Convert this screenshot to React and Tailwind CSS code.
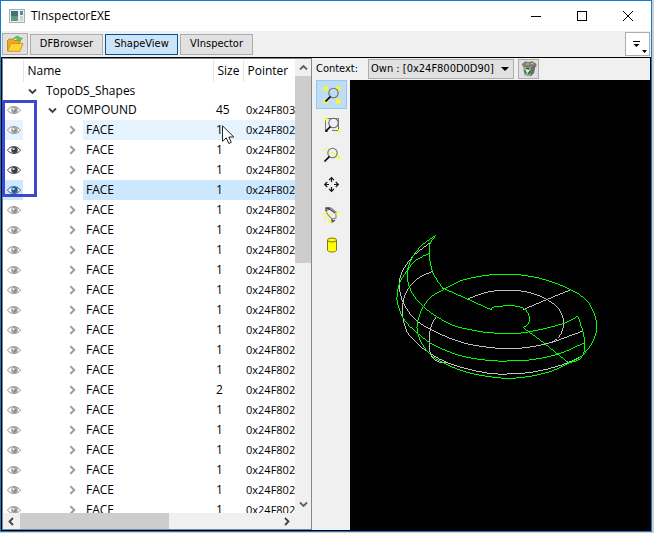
function smooth(points) {
  const p = points.trim().split(/\s+/).map((s) => s.split(",").map(Number));
  let d = `M${p[0][0]},${p[0][1]}`;
  for (let i = 0; i < p.length - 1; i++) {
    const a = p[i - 1] || p[i];
    const b = p[i];
    const c = p[i + 1];
    const e = p[i + 2] || c;
    d += ` C${b[0] + (c[0] - a[0]) / 6},${b[1] + (c[1] - a[1]) / 6} ${c[0] - (e[0] - b[0]) / 6},${c[1] - (e[1] - b[1]) / 6} ${c[0]},${c[1]}`;
  }
  return d;
}

const greyCurves = [
  "137,52 90,88 62,122 46,155 43,190 56,235 90,283 150,320 230,352 310,367 370,370 430,367 500,352 550,334 595,318",
  "142,139 100,160 73,187 57,220 52,262 60,303 77,336 130,382 200,418 300,443 370,447 450,440 530,420 590,394",
  "152,277 138,306 133,340 135,380 145,400 165,412 184,411",
  "248,222 300,203 350,196 400,197 445,206 485,223 520,250 536,290 527,328 505,349 480,358",
  "415,254 485,224 555,195",
];
const greenCurves = [
  "152,31 112,60 80,100 67,145 77,195 115,245 190,295 250,313 310,323 370,325 430,321 530,297 578,274",
  "132,85 90,108 64,141 45,172 37,205 38,237 58,285 98,325 150,362 230,393 310,406 370,408 440,404 520,387 597,354",
  "178,192 140,215 114,247 98,290 98,325 115,363 140,392 165,408 230,437 300,453 370,460 440,453 500,438 553,413 590,393 622,352 636,305 622,253 598,220 555,193 480,164 400,149 320,149 235,165 178,192",
  "152,31 135,58 133,95 143,140 158,168 175,192",
  "318,254 330,245 390,243 420,253 433,275 431,295 415,308",
  "578,274 590,305 599,350 596,385 580,405 553,413",
];

function Wireframe() {
  return (
    <svg width="301" height="450" viewBox="350 80 301 450" className="block" shapeRendering="crispEdges" role="img" aria-label="Wireframe shape">
      <g transform="translate(385 225) scale(0.33333)" fill="none" strokeWidth="3">
        {greyCurves.map((c) => <path key={c} d={smooth(c)} stroke="#c0c0c0" />)}
        {greenCurves.map((c) => <path key={c} d={smooth(c)} stroke="#00ff00" />)}
        <path d="M175,190L245,221L318,254M415,308L482,358L553,415" stroke="#00ff00" />
      </g>
    </svg>
  );
}

function Eye({ tone }) {
  const c = tone === "dark" ? "#3a3a40" : tone === "blue" ? "#2c5a80" : "#8f8f8f";
  const iris = tone === "dark" ? "#2c3d6b" : tone === "blue" ? "#1d5c94" : "#a4a4a4";
  return (
    <svg width="14" height="10" viewBox="0 0 14 10" className="block">
      <path d="M.5 5.200C3 .6 10 .2 13.500 5.200C10.500 9.400 3.500 9.600 .5 5.200Z" fill="#fff" fillOpacity=".7" stroke={c} />
      <circle cx="7.500" cy="4.900" r="3" fill={iris} stroke={c} strokeWidth=".6" />
      <rect x="7" y="4" width="2" height="3" fill={c} />
      <rect x="5.500" y="3" width="2" height="2" fill="#fff" fillOpacity=".8" />
    </svg>
  );
}

function Chevron({ dir, color = "#404040", size = 9 }) {
  const d = { down: "M1 2.500L4.500 6L8 2.500", up: "M1 6.500L4.500 3L8 6.500", right: "M3 1L6.500 4.500L3 8", left: "M6 1L2.500 4.500L6 8" }[dir];
  return (
    <svg width={size} height={size} viewBox="0 0 9 9" className="block" fill="none" stroke={color} strokeWidth="1.8">
      <path d={d} />
    </svg>
  );
}

function Folder() {
  return (
    <svg width="18" height="18" viewBox="0 0 18 18" className="block">
      <path d="M1.500 16V5.500L3 4H7L8.500 5.500H14V8" fill="#e8ad22" stroke="#c98a10" />
      <path d="M1.500 16.300L5 8.500H17L14 16.300Z" fill="#ffd23c" stroke="#d79a18" />
      <path d="M7.500 4C9 .8 13 .5 14 3H16.500L13.500 6.800L10.500 4H12C11.500 2.500 9.500 2.500 7.500 4Z" fill="#62c862" stroke="#39a64a" strokeWidth=".6" />
    </svg>
  );
}

function Trash() {
  return (
    <svg width="16" height="16" viewBox="0 0 16 16" className="block">
      <path d="M1.500 4L9 3.500L14.500 4.500L13 12L9.500 15.500L3.500 14.500Z" fill="#a3a39e" />
      <path d="M10 6L14.500 4.500L13 12L9.500 15.500Z" fill="#6c6c68" />
      <path d="M1 3.500L4 .8L8 1.500L11 .5L15 3V5.500L11 4.500L7 6L3 5Z" fill="#85857d" stroke="#5c5c56" strokeWidth=".6" />
      <path d="M5 3H8M10 2.500H12" stroke="#d5c94e" />
      <circle cx="6.500" cy="10" r="2.500" fill="#d8e6d4" stroke="#087a18" strokeWidth="1.600" strokeDasharray="3.500 1.500" />
    </svg>
  );
}

function Lens({ x, y }) {
  return (
    <g fill="none">
      <circle cx={x} cy={y} r="4.700" stroke="#6e6e6e" strokeWidth="1.100" />
      <path d={`M${x - 3} ${y + 3.500}L${x - 8} ${y + 8.500}`} stroke="#000" strokeWidth="1.700" />
    </g>
  );
}

function ToolIcon({ name }) {
  return (
    <svg width="18" height="18" viewBox="0 0 18 18" className="block" fill="none">
      {name === "Fit all" && (
        <>
          <path d="M1.500 5V1.500H5M1.500 1.500L5 5M13 1.500H16.500V5M16.500 1.500L14 4M16.500 13V16.500H13M16.500 16.500L12.500 12.500M1.500 13V16.500H5" stroke="#ffff00" strokeWidth="1.500" />
          <Lens x={10.500} y={7} />
        </>
      )}
      {name === "Fit area" && (
        <>
          <path d="M3 2.500H15.500V14.500H9M2.500 4V15.500H5" stroke="#777" />
          <Lens x={10.500} y={7} />
          <path d="M.5 2.500H4.500M2.500 .5V4.500M13.500 15.500H17.500M15.500 13.500V17.500" stroke="#ffff00" strokeWidth="1.200" />
        </>
      )}
      {name === "Zoom" && (
        <>
          <Lens x={9.500} y={7} />
          <path d="M1 3H4M7 6L12 8M13.500 11.500H17.500M15.500 9.500V13.500" stroke="#ffff00" strokeWidth="1.200" />
        </>
      )}
      {name === "Pan" && (
        <path d="M8.500 6V2M8.500 11V15M6 8.500H2M11 8.500H15M6 4.200L8.500 1.700L11 4.200M6 12.800L8.500 15.300L11 12.800M4.200 6L1.700 8.500L4.200 11M12.800 6L15.300 8.500L12.800 11" stroke="#16160c" strokeWidth="1.200" />
      )}
      {name === "Rotate" && (
        <>
          <path d="M3 5L8 2L13 6L13 12L9 13L5 9Z" stroke="#888" strokeWidth="1.100" />
          <path d="M3 5V2H7M3 2L8 4L12 7M9 13V16L12 14" stroke="#444" strokeWidth="1.300" />
          <path d="M0 8L4 7M6 9L10 8M13 8L17 6M1 13L4 10M5 16H9M7 14V17" stroke="#ffff00" strokeWidth="1.200" />
        </>
      )}
      {name === "Display mode" && (
        <>
          <path d="M4.500 4V14.500C6 16.500 12 16.500 13.500 14.500V4" fill="#ffff00" stroke="#78781c" />
          <ellipse cx="9" cy="4" rx="4.500" ry="2" fill="#ffff00" stroke="#78781c" />
        </>
      )}
    </svg>
  );
}

const faces = Array.from({ length: 20 }, (_, i) => ({
  size: i === 13 ? 2 : 1,
  tone: i === 3 ? "blue" : i === 1 || i === 2 ? "dark" : "grey",
  bg: i === 0 ? "bg-[#e5f3ff]" : i === 3 ? "bg-[#cce8ff]" : "",
}));

function Tree() {
  return (
    <section className="flex w-[310px] shrink-0 flex-col border border-[#828790] bg-white font-['Open_Sans',sans-serif] text-[12px] leading-[18px]">
      <div className="flex min-h-0 flex-1">
        <div className="min-w-0 flex-1 overflow-hidden pt-px">
          <table className="w-full table-fixed border-collapse text-left">
            <colgroup>
              <col className="w-[20px]" />
              <col className="w-[190px]" />
              <col className="w-[30px]" />
              <col />
            </colgroup>
            <thead>
              <tr className="h-[22px]">
                <th className="border-r border-[#e5e5e5] p-0" aria-label="Visibility" />
                <th className="border-r border-[#e5e5e5] p-0 pl-1 font-normal">Name</th>
                <th className="border-r border-[#e5e5e5] p-0 pl-1 font-normal">Size</th>
                <th className="p-0 pl-1 font-normal">Pointer</th>
              </tr>
            </thead>
            <tbody className="whitespace-nowrap">
              <tr className="h-[18px]">
                <td className="p-0" />
                <td className="p-0">
                  <div className="flex items-center gap-[9px] pl-[5px]">
                    <button aria-label="Collapse TopoDS_Shapes"><Chevron dir="down" /></button>
                    TopoDS_Shapes
                  </div>
                </td>
                <td className="p-0" />
                <td className="p-0" />
              </tr>
              <tr className="h-[20px]">
                <td className="p-0 pl-1"><Eye tone="grey" /></td>
                <td className="p-0">
                  <div className="flex items-center gap-[9px] pl-[25px]">
                    <button aria-label="Collapse COMPOUND"><Chevron dir="down" /></button>
                    COMPOUND
                  </div>
                </td>
                <td className="p-0 pl-[3px]">45</td>
                <td className="p-0 pl-[3px] text-[11px]">0x24F803</td>
              </tr>
              {faces.map((f, i) => (
                <tr key={i} className="h-[20px]">
                  <td className={`p-0 pl-1 ${f.bg}`}><Eye tone={f.tone} /></td>
                  <td className="p-0">
                    <div className="flex h-[20px] items-center pl-[44px]">
                      <button className="w-[16px]" aria-label="Expand FACE"><Chevron dir="right" color="#9c9c9c" size={10} /></button>
                      <span className={`h-full flex-1 pl-[3px] leading-[20px] ${f.bg}`}>FACE</span>
                    </div>
                  </td>
                  <td className={`p-0 pl-[3px] ${f.bg}`}>{f.size}</td>
                  <td className={`p-0 pl-[3px] text-[11px] ${f.bg}`}>0x24F802</td>
                </tr>
              ))}
            </tbody>
          </table>
        </div>
        <div className="flex w-[16px] shrink-0 flex-col items-center bg-[#f0f0f0]">
          <button className="flex h-[17px] items-center" aria-label="Scroll up"><Chevron dir="up" color="#606060" /></button>
          <div className="h-[187px] w-full bg-[#cdcdcd]" />
          <button className="mt-auto flex h-[17px] items-center" aria-label="Scroll down"><Chevron dir="down" color="#606060" /></button>
        </div>
      </div>
      <div className="flex h-[16px] shrink-0 items-center bg-[#f0f0f0] pr-[16px]">
        <button className="flex w-[17px] justify-center" aria-label="Scroll left"><Chevron dir="left" color="#404040" /></button>
        <div className="h-full w-[149px] bg-[#cdcdcd]" />
        <button className="ml-auto flex w-[17px] justify-center" aria-label="Scroll right"><Chevron dir="right" color="#404040" /></button>
      </div>
    </section>
  );
}

const tools = ["Fit all", "Fit area", "Zoom", "Pan", "Rotate", "Display mode"];

export default function App() {
  return (
    <div className="relative h-screen w-full bg-[#d0d0d0] pr-[2px] pb-px font-['DejaVu_Sans_Condensed','Noto_Sans',sans-serif] text-[11px] text-black">
      <div className="flex h-full flex-col border border-[#1979ca] bg-[#f0f0f0]">
        <header className="flex h-[30px] shrink-0 items-center bg-white pl-2 font-['Open_Sans',sans-serif] text-[12px]">
          <svg width="16" height="14" viewBox="0 0 16 14" className="mr-[6px]">
            <rect x=".5" y=".5" width="15" height="13" fill="#e9eef0" stroke="#a5afb4" />
            <rect x="2" y="2" width="7" height="10" fill="#43736e" />
            <rect x="2" y="7" width="7" height="5" fill="#5d9b7a" />
            <rect x="11" y="2" width="3" height="4" fill="#5688aa" />
            <rect x="11" y="7" width="3" height="5" fill="#c8d4d8" />
          </svg>
          <h1>TInspectorEXE</h1>
          <div className="ml-auto flex">
            <button className="flex w-[46px] justify-center" aria-label="Minimize">
              <svg width="10" height="10" viewBox="0 0 10 10"><path d="M0 5.500H10" stroke="#000" /></svg>
            </button>
            <button className="flex w-[46px] justify-center" aria-label="Maximize">
              <svg width="10" height="10" viewBox="0 0 10 10"><rect x=".5" y=".5" width="9" height="9" fill="none" stroke="#000" /></svg>
            </button>
            <button className="flex w-[46px] justify-center" aria-label="Close">
              <svg width="10" height="10" viewBox="0 0 10 10"><path d="M0 0L10 10M10 0L0 10" stroke="#000" /></svg>
            </button>
          </div>
        </header>
        <nav className="flex h-[26px] shrink-0 items-center gap-[2px] px-px">
          <button className="flex h-[22px] w-[26px] items-center justify-center border border-[#adadad] bg-[#e1e1e1]" aria-label="Open"><Folder /></button>
          <button className="h-[21px] w-[73px] border border-[#adadad] bg-[#e1e1e1]">DFBrowser</button>
          <button className="h-[21px] w-[73px] border border-[#005499] bg-[#cce4f7]">ShapeView</button>
          <button className="h-[21px] w-[73px] border border-[#adadad] bg-[#e1e1e1]">VInspector</button>
          <button className="ml-auto flex h-[24px] w-[25px] items-center justify-center border border-[#adadad] bg-white" aria-label="Options">
            <svg width="23" height="22" viewBox="0 0 23 22">
              <path d="M7 8.500H14" stroke="#000" />
              <path d="M7.500 11H13.500L10.500 14ZM16 17H21L18.500 20Z" fill="#000" />
            </svg>
          </button>
        </nav>
        <main className="flex min-h-0 flex-1 border border-black">
          <Tree />
          <section className="flex min-w-0 flex-1 flex-col">
            <div className="flex h-[22px] shrink-0 items-center pl-1">
              <label htmlFor="context" className="w-[52px]">Context:</label>
              <div className="relative">
                <select id="context" className="block h-[20px] w-[146px] appearance-none border border-[#adadad] bg-[#e1e1e1] pl-[2px] text-[11px] leading-[18px]">
                  <option>Own : [0x24F800D0D90]</option>
                </select>
                <svg width="8" height="4" viewBox="0 0 8 4" className="pointer-events-none absolute top-2 right-[5px]"><path d="M0 0H8L4 4Z" fill="#000" /></svg>
              </div>
              <button className="ml-1 flex h-[20px] w-[21px] items-center justify-center border border-[#adadad] bg-[#e1e1e1]" aria-label="Clear context"><Trash /></button>
            </div>
            <div className="flex min-h-0 flex-1">
              <div className="flex w-[38px] shrink-0 flex-col items-start gap-px pl-1">
                {tools.map((t, i) => (
                  <button key={t} aria-label={t} className={`flex h-[29px] w-[31px] items-center justify-center border ${i === 0 ? "border-[#90c8f6] bg-[#c0dcf3]" : "border-transparent"}`}>
                    <ToolIcon name={t} />
                  </button>
                ))}
              </div>
              <div className="min-w-0 flex-1 overflow-hidden bg-black"><Wireframe /></div>
            </div>
          </section>
        </main>
      </div>
      <div className="pointer-events-none absolute top-[100px] left-[2px] h-[97px] w-[35px] border-[3px] border-[#3f48cc]" />
      <svg width="13" height="20" viewBox="0 0 13 20" className="pointer-events-none absolute top-[125px] left-[222px]">
        <path d="M.5 .8V16.300L4.200 12.800L6.800 18.500L9.300 17.400L6.800 12H11.800Z" fill="#fff" stroke="#222" />
      </svg>
    </div>
  );
}
